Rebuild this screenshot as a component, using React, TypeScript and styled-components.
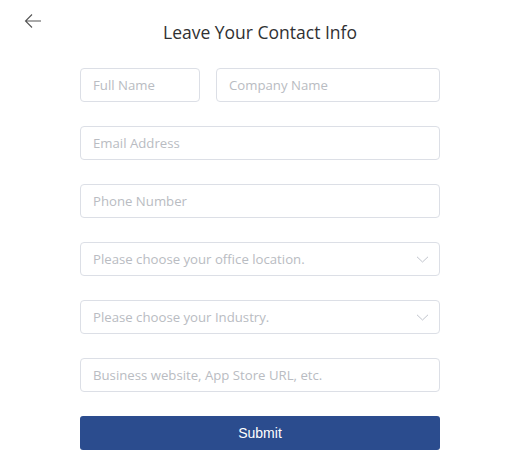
import { FC } from "react";
import styled, { createGlobalStyle } from "styled-components";

const GlobalStyle = createGlobalStyle`
  html, body {
    margin: 0;
    padding: 0;
    background: #ffffff;
  }
  * {
    box-sizing: border-box;
  }
`;

const Page = styled.div`
  position: relative;
  width: 505px;
  height: 467px;
  background: #fff;
  font-family: "Open Sans", "Noto Sans", sans-serif;
`;

const BackButton = styled.button`
  position: absolute;
  left: 24px;
  top: 12px;
  width: 18px;
  height: 18px;
  padding: 0;
  border: none;
  background: transparent;
  cursor: pointer;
  display: flex;
  align-items: center;
  justify-content: center;
`;

const Form = styled.form`
  width: 360px;
  margin-left: 80px;
  padding-top: 20px;
  display: flex;
  flex-direction: column;
  gap: 24px;
`;

const Title = styled.h1`
  margin: 0;
  text-align: center;
  font-size: 17.5px;
  font-weight: 500;
  line-height: 24px;
  color: #303133;
`;

const Row = styled.div`
  display: flex;
  gap: 16px;
`;

const FieldBox = styled.div<{ $width?: number }>`
  position: relative;
  flex: ${(p) => (p.$width ? `0 0 ${p.$width}px` : "1 1 auto")};
  height: 34px;
`;

const Input = styled.input`
  width: 100%;
  height: 100%;
  padding: 0 12px;
  border: 1px solid #dcdfe6;
  border-radius: 4px;
  font-family: "Open Sans", "Noto Sans", sans-serif;
  font-size: 13.2px;
  color: #606266;
  outline: none;

  &::placeholder {
    color: #b9bcc2;
  }
`;

const Select = styled.div`
  width: 100%;
  height: 100%;
  padding: 0 36px 0 12px;
  border: 1px solid #dcdfe6;
  border-radius: 4px;
  display: flex;
  align-items: center;
  font-size: 13.2px;
  color: #b9bcc2;
  cursor: pointer;
`;

const Chevron = styled.svg`
  position: absolute;
  right: 11px;
  top: 14px;
`;

const SubmitButton = styled.button`
  height: 34px;
  border: none;
  border-radius: 3px;
  background: #2b4c8e;
  color: #fff;
  font-family: "Liberation Sans", Arial, sans-serif;
  font-size: 14px;
  cursor: pointer;
`;

const TextField: FC<{ placeholder: string; width?: number }> = ({ placeholder, width }) => (
  <FieldBox $width={width}>
    <Input placeholder={placeholder} />
  </FieldBox>
);

const SelectField: FC<{ placeholder: string }> = ({ placeholder }) => (
  <FieldBox>
    <Select>{placeholder}</Select>
    <Chevron width="13" height="7" viewBox="0 0 13 7" fill="none">
      <path d="M1 0.8l5.5 5.2L12 0.8" stroke="#c0c4cc" strokeWidth="1" />
    </Chevron>
  </FieldBox>
);

const App: FC = () => {
  return (
    <Page>
      <GlobalStyle />
      <BackButton type="button" aria-label="Back">
        <svg width="18" height="16" viewBox="0 0 18 16" fill="none">
          <path d="M17 8H2M8 1.5L1.5 8 8 14.5" stroke="#555" strokeWidth="1.1" />
        </svg>
      </BackButton>
      <Form onSubmit={(e) => e.preventDefault()}>
        <Title>Leave Your Contact Info</Title>
        <Row>
          <TextField placeholder="Full Name" width={120} />
          <TextField placeholder="Company Name" />
        </Row>
        <TextField placeholder="Email Address" />
        <TextField placeholder="Phone Number" />
        <SelectField placeholder="Please choose your office location." />
        <SelectField placeholder="Please choose your Industry." />
        <TextField placeholder="Business website, App Store URL, etc." />
        <SubmitButton type="submit">Submit</SubmitButton>
      </Form>
    </Page>
  );
};

export default App;
